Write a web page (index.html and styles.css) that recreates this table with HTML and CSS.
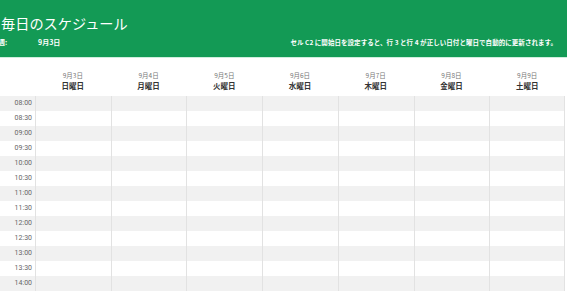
FILE: index.html
```html
<!DOCTYPE html>
<html lang="ja">
<head>
<meta charset="utf-8">
<link rel="stylesheet" href="styles.css">
</head>
<body>
<header class="banner">
  <h1 class="title">毎日のスケジュール</h1>
  <div class="sub">
    <div class="week"><span class="week-label">週:</span><span class="week-date">9月3日</span></div>
    <div class="note">セル C2 に開始日を設定すると、行 3 と行 4 が正しい日付と曜日で自動的に更新されます。</div>
  </div>
</header>
<main class="sched">
  <div class="head-row">
    <div class="hcell corner"></div>
    <div class="hcell"><span class="date">9月3日</span><span class="day">日曜日</span></div>
    <div class="hcell"><span class="date">9月4日</span><span class="day">月曜日</span></div>
    <div class="hcell"><span class="date">9月5日</span><span class="day">火曜日</span></div>
    <div class="hcell"><span class="date">9月6日</span><span class="day">水曜日</span></div>
    <div class="hcell"><span class="date">9月7日</span><span class="day">木曜日</span></div>
    <div class="hcell"><span class="date">9月8日</span><span class="day">金曜日</span></div>
    <div class="hcell"><span class="date">9月9日</span><span class="day">土曜日</span></div>
  </div>
  <div class="rows" id="rows"></div>
</main>
<script>
  var times = ["08:00","08:30","09:00","09:30","10:00","10:30","11:00","11:30","12:00","12:30","13:00","13:30","14:00"];
  var rows = document.getElementById("rows");
  times.forEach(function (t, i) {
    var r = document.createElement("div");
    r.className = "row" + (i % 2 === 0 ? " shade" : "");
    var tc = document.createElement("div");
    tc.className = "time";
    tc.textContent = t;
    r.appendChild(tc);
    for (var k = 0; k < 7; k++) {
      var c = document.createElement("div");
      c.className = "cell";
      r.appendChild(c);
    }
    rows.appendChild(r);
  });
</script>
</body>
</html>
```

FILE: styles.css
```css
* { box-sizing: border-box; }
html, body { margin: 0; padding: 0; background: #fff; }
body {
  font-family: "Noto Sans CJK JP", "Noto Sans", sans-serif;
  width: 567px;
  overflow: hidden;
}
.banner {
  background: #139a55;
  height: 58px;
  border-bottom: 1px solid #cfeedd;
  color: #fff;
  padding: 13px 10px 0 1px;
}
.title {
  margin: 0;
  font-size: 14.2px;
  font-weight: 400;
  line-height: 21px;
}
.sub {
  display: flex;
  justify-content: space-between;
  align-items: center;
  margin-top: 2px;
  height: 12px;
}
.week {
  display: flex;
  align-items: center;
  margin-left: -3px;
  font-size: 7px;
  font-weight: 700;
}
.week-label { width: 40px; }
.note {
  font-size: 6.5px;
  font-weight: 700;
  letter-spacing: 0.05px;
}
.sched { width: 565px; }
.head-row {
  display: grid;
  grid-template-columns: 35px repeat(7, 1fr);
  height: 38px;
}
.hcell {
  display: flex;
  flex-direction: column;
  align-items: center;
  justify-content: flex-start;
  padding-top: 12px;
}
.date {
  font-size: 6.5px;
  color: #777;
  line-height: 10px;
}
.day {
  font-size: 7.5px;
  font-weight: 700;
  color: #333;
  line-height: 12px;
}
.row {
  display: grid;
  grid-template-columns: 35px repeat(7, 1fr);
  height: 15px;
  background: #fff;
}
.row.shade { background: #f1f1f1; }
.time {
  font-family: Roboto, "Noto Sans", sans-serif;
  font-size: 7px;
  color: #666;
  text-align: right;
  padding-right: 3px;
  line-height: 15px;
}
.cell { border-left: 1px solid #e2e2e2; }
.cell:last-child { border-right: 1px solid #e2e2e2; }
```
